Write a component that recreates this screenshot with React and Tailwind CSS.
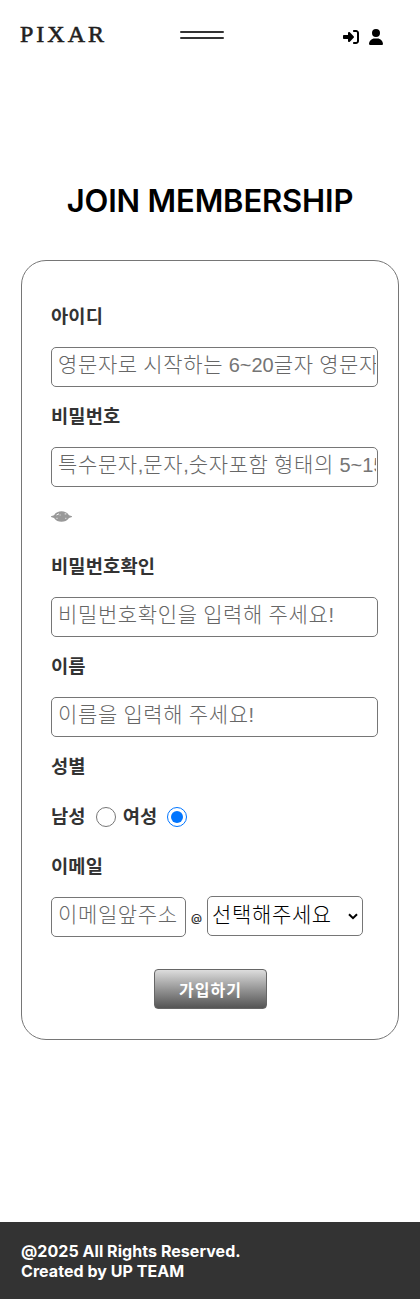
import React from 'react';
import { FaUser, FaRightToBracket } from 'react-icons/fa6';

function Label({ children }) {
  return (
    <h3 className='flex h-[50px] items-center pb-0.5 font-["Noto_Sans_CJK_KR",sans-serif] text-[18.72px] font-bold leading-none tracking-[0.15px] text-[#333]'>
      {children}
    </h3>
  );
}

function FieldText({ parts }) {
  return parts.map((part, i) => (
    <span
      key={i}
      className={/[가-힣]/.test(part) ? 'text-[21px] tracking-[0.62px]' : 'font-normal tracking-normal text-[#757575]'}
    >
      {part}
    </span>
  ));
}

function Field({ parts, wide = true }) {
  return (
    <div className="flex h-[50px] items-center pt-0.5">
      <div
        className={`${wide ? 'w-full' : 'w-[135px]'} h-10 rounded-[5px] border border-[#767676] bg-white pl-1.5 pr-px`}
      >
        <div className='h-[38px] overflow-hidden whitespace-pre font-["Liberation_Sans","Noto_Sans_CJK_KR",sans-serif] text-[20px] font-light leading-[34px] text-[#666]'>
          <FieldText parts={parts} />
        </div>
      </div>
    </div>
  );
}

function Radio({ checked = false }) {
  return checked ? (
    <span className="flex size-5 items-center justify-center rounded-full border border-[#0075ff]">
      <span className="size-3 rounded-full bg-[#0075ff]" />
    </span>
  ) : (
    <span className="block size-5 rounded-full border border-[#767676]" />
  );
}

export default function App() {
  return (
    <div className="flex h-[1299px] w-[420px] flex-col bg-white">
      <header className="flex h-[70px] items-start">
        <div className='ml-5 mt-5 w-[160px] font-["Liberation_Serif",serif] text-[24px] font-normal leading-[28px] tracking-[3px] text-[#231f20] [-webkit-text-stroke:0.6px_#231f20]'>
          PIXAR
        </div>
        <div className="mt-[31px] flex w-[44px] flex-col gap-1">
          <span className="h-0.5 rounded-full bg-[#333]" />
          <span className="h-0.5 rounded-full bg-[#333]" />
        </div>
        <div className="ml-[119px] mt-[29px] flex gap-[10px] text-black">
          <FaRightToBracket className="size-4" />
          <FaUser className="h-4 w-3.5" />
        </div>
      </header>

      <h1 className="mt-[106px] text-center font-[Inter,sans-serif] text-[31px] font-semibold leading-[50px] tracking-[-0.15px] text-black">
        JOIN MEMBERSHIP
      </h1>

      <main className="ml-[21px] mt-[34px] h-[780px] w-[378px] rounded-[25px] border border-[#767676] pb-[29px] pl-[29px] pr-5 pt-[30px]">
        <Label>아이디</Label>
        <Field parts={['영문자로', ' ', '시작하는', ' 6~20', '글자', ' ', '영문자']} />
        <Label>비밀번호</Label>
        <Field parts={['특수문자', ',', '문자', ',', '숫자포함', ' ', '형태의', ' 5~15', '자']} />
        <div className="flex h-[50px] items-center">
          <svg className="mt-px h-[11px] w-[21px]" viewBox="0 0 21 11">
            <path d="M0 5.200 3 4.200C4.800 1.200 7.500.2 10.500.2s5.700 1 7.500 4l3 1v.8l-3 1C16.200 9.800 13.500 10.800 10.500 10.800S4.800 9.800 3 7L0 6Z" fill="#999" />
            <path d="M5.500 4 8 2.800M13.700 2.900h1.600M8.700 4h.8M5.500 7.300h1M14.300 7.300h1" stroke="#fff" strokeWidth=".9" fill="none" />
          </svg>
        </div>
        <Label>비밀번호확인</Label>
        <Field parts={['비밀번호확인을', ' ', '입력해', ' ', '주세요', '!']} />
        <Label>이름</Label>
        <Field parts={['이름을', ' ', '입력해', ' ', '주세요', '!']} />
        <Label>성별</Label>
        <div className="flex items-center">
          <Label>남성</Label>
          <span className="ml-2.5 mr-[7px] mt-0.5"><Radio /></span>
          <Label>여성</Label>
          <span className="ml-2.5 mt-0.5"><Radio checked /></span>
        </div>
        <Label>이메일</Label>
        <div className="flex">
          <Field wide={false} parts={['이메일앞주소']} />
          <span className="w-[21px] pt-[19px] text-center font-[Inter,sans-serif] text-[11px] font-semibold leading-4 text-[#333]">@</span>
          <div className="mt-[5px] flex h-10 w-[156px] items-center justify-between rounded-[5px] border border-[#767676] pl-1 pr-1">
            <span className='mb-0.5 whitespace-nowrap font-["Liberation_Sans","Noto_Sans_CJK_KR",sans-serif] text-[21px] font-light leading-[36px] tracking-[0.65px] text-black'>선택해주세요</span>
            <svg className="h-[7px] w-2.5" viewBox="0 0 10 7">
              <path d="m1 1.200 4 4 4-4" fill="none" stroke="#000" strokeWidth="2" />
            </svg>
          </div>
        </div>
        <button className='ml-[103px] mt-7 flex h-10 w-[113px] items-center justify-center rounded-[4px] border border-[#666] bg-linear-to-b from-[#ddd] to-[#555] font-["Noto_Sans_CJK_KR",sans-serif] text-[16px] font-bold tracking-[1px] text-white'>
          가입하기
        </button>
      </main>

      <footer className="mt-auto h-[77px] bg-[#333] pl-[21px] pt-[19px] font-[Inter,sans-serif] text-[16px] font-bold leading-5 tracking-[0.05px] text-white">
        <p>@2025 All Rights Reserved.</p>
        <p>Created by UP TEAM</p>
      </footer>
    </div>
  );
}
